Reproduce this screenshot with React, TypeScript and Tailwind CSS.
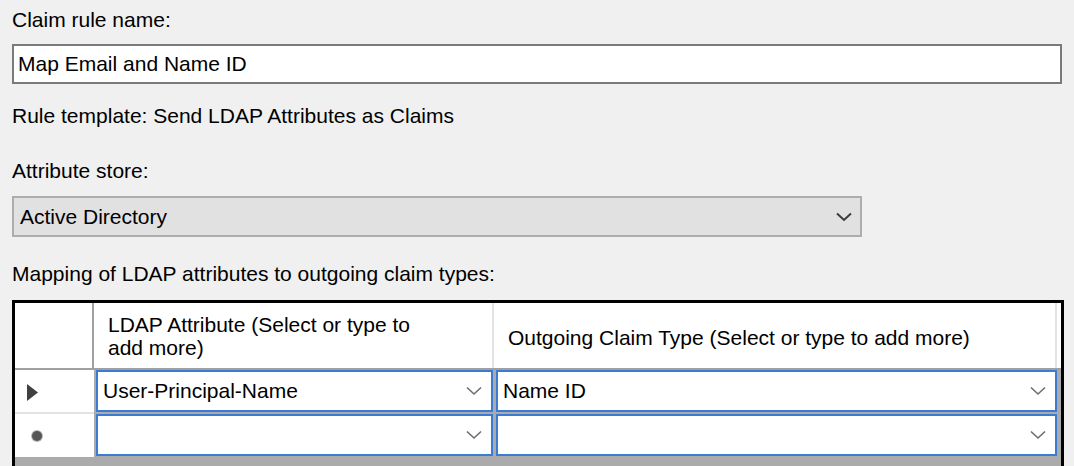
import React from 'react'

function Chevron({ dark = false }: { dark?: boolean }) {
  return (
    <svg width="16" height="10" viewBox="0 0 16 10" className="shrink-0">
      <polyline
        points="1,1.5 8,8 15,1.5"
        fill="none"
        stroke={dark ? '#3c3c3c' : '#6e6e6e'}
        strokeWidth={dark ? 2 : 1.6}
      />
    </svg>
  )
}

function Cell({ value, width }: { value?: string; width: string }) {
  return (
    <div className={`${width} h-[42px] border-2 border-[#3b7bd4] bg-white flex items-center justify-between pl-[5px] pr-[9px]`}>
      <span className="text-black">{value}</span>
      <Chevron />
    </div>
  )
}

export default function App() {
  return (
    <div className="w-[1074px] h-[466px] overflow-hidden bg-[#f0f0f0] text-black text-[21px] leading-[24px] font-['Liberation_Sans',Arial,sans-serif] pl-[12px] pt-[8px] flex flex-col">
      <div>Claim rule name:</div>

      {/* rule name */}
      <div className="mt-[12px] w-[1050px] h-[40px] border-2 border-[#7a7a7a] bg-white flex items-center pl-[4px]">
        Map Email and Name ID
      </div>

      <div className="mt-[20px]">Rule template: Send LDAP Attributes as Claims</div>

      <div className="mt-[31px]">Attribute store:</div>

      {/* attribute store combo */}
      <div className="mt-[13px] w-[850px] h-[41px] border-2 border-[#adadad] bg-[#e1e1e1] flex items-center justify-between pl-[6px] pr-[8px]">
        <span>Active Directory</span>
        <Chevron dark />
      </div>

      <div className="mt-[25px]">Mapping of LDAP attributes to outgoing claim types:</div>

      {/* mapping grid */}
      <div className="mt-[14px] w-[1052px] flex-1 border-[3px] border-b-0 border-black bg-[#ababab] flex flex-col">
        {/* header */}
        <div className="flex h-[67px] bg-white border-b-2 border-[#a0a0a0]">
          <div className="w-[79px] border-r-2 border-[#a0a0a0]"></div>
          <div className="w-[400px] border-r-2 border-[#e3e3e3] flex items-center pl-[14px] leading-[23px]">
            <span>
              LDAP Attribute (Select or type to
              <br />
              add more)
            </span>
          </div>
          <div className="w-[563px] border-r-2 border-[#e3e3e3] flex items-center pl-[14px] pt-[4px]">
            Outgoing Claim Type (Select or type to add more)
          </div>
        </div>

        {/* row 1 */}
        <div className="flex items-start">
          <div className="w-[79px] h-[44px] bg-white border-b-2 border-[#e3e3e3] flex items-center pl-[12px] pt-[2px]">
            <svg width="11" height="17" viewBox="0 0 11 17">
              <path d="M0 0 L11 8.5 L0 17 Z" fill="#404040" />
            </svg>
          </div>
          <div className="w-[2px]"></div>
          <Cell value="User-Principal-Name" width="w-[397px]" />
          <div className="w-[3px]"></div>
          <Cell value="Name ID" width="w-[561px]" />
        </div>

        {/* new row */}
        <div className="flex items-start">
          <div className="w-[79px] h-[43px] bg-white flex items-center pl-[17px]">
            <div className="w-[10px] h-[10px] rounded-full bg-[#555555] ring-1 ring-[#b8b8b8]"></div>
          </div>
          <div className="w-[2px]"></div>
          <Cell width="w-[397px]" />
          <div className="w-[3px]"></div>
          <Cell width="w-[561px]" />
        </div>
      </div>
    </div>
  )
}
